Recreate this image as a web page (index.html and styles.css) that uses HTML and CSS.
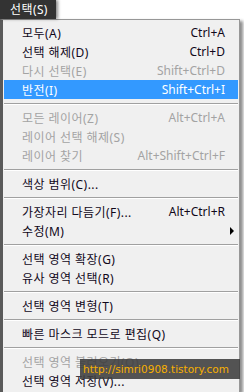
FILE: index.html
```html
<!DOCTYPE html>
<html lang="ko">
<head>
    <meta charset="UTF-8">
    <meta name="viewport" content="width=device-width, initial-scale=1.0">
    <title>선택 메뉴</title>
    <link rel="stylesheet" href="styles.css">
</head>
<body>
    <div class="menubar">
        <div class="menu-title">선택(S)</div>
    </div>

    <ul class="menu">
        <li class="item"><span class="label">모두(A)</span><span class="key">Ctrl+A</span></li>
        <li class="item"><span class="label">선택 해제(D)</span><span class="key">Ctrl+D</span></li>
        <li class="item disabled"><span class="label">다시 선택(E)</span><span class="key">Shift+Ctrl+D</span></li>
        <li class="item active"><span class="label">반전(I)</span><span class="key">Shift+Ctrl+I</span></li>
        <li class="sep"></li>
        <li class="item disabled"><span class="label">모든 레이어(Z)</span><span class="key">Alt+Ctrl+A</span></li>
        <li class="item disabled"><span class="label">레이어 선택 해제(S)</span><span class="key"></span></li>
        <li class="item disabled"><span class="label">레이어 찾기</span><span class="key">Alt+Shift+Ctrl+F</span></li>
        <li class="sep"></li>
        <li class="item"><span class="label">색상 범위(C)...</span><span class="key"></span></li>
        <li class="sep"></li>
        <li class="item"><span class="label">가장자리 다듬기(F)...</span><span class="key">Alt+Ctrl+R</span></li>
        <li class="item has-sub"><span class="label">수정(M)</span><span class="key"></span></li>
        <li class="sep"></li>
        <li class="item"><span class="label">선택 영역 확장(G)</span><span class="key"></span></li>
        <li class="item"><span class="label">유사 영역 선택(R)</span><span class="key"></span></li>
        <li class="sep"></li>
        <li class="item"><span class="label">선택 영역 변형(T)</span><span class="key"></span></li>
        <li class="sep"></li>
        <li class="item"><span class="label">빠른 마스크 모드로 편집(Q)</span><span class="key"></span></li>
        <li class="sep"></li>
        <li class="item disabled"><span class="label">선택 영역 불러오기(O)...</span><span class="key"></span></li>
        <li class="item"><span class="label">선택 영역 저장(V)...</span><span class="key"></span></li>
    </ul>

    <div class="watermark">http://simri0908.tistory.com</div>
</body>
</html>
```

FILE: styles.css
```css
body {
    margin: 0;
    background: #fff;
    font-family: 'Noto Sans', 'Noto Sans CJK KR', sans-serif;
    font-size: 12px;
    color: #10081a;
    width: 244px;
    height: 392px;
    overflow: hidden;
    position: relative;
}

.menubar {
    display: flex;
    height: 19px;
}

.menu-title {
    background: #333;
    color: #fff;
    padding: 0 8px 0 10px;
    line-height: 19px;
    letter-spacing: 0.4px;
    box-shadow: 2px 0 3px rgba(0, 0, 0, 0.45);
    position: relative;
    z-index: 1;
}

.menu {
    list-style: none;
    margin: 0;
    padding: 3px 1px 2px 1px;
    width: 240px;
    box-sizing: border-box;
    background: #f0f0f0;
    border-left: 3px solid #5a5a5a;
    border-top: 1px solid #979797;
    border-right: 1px solid #979797;
    box-shadow: 3px 2px 3px rgba(0, 0, 0, 0.45);
}

.item {
    display: flex;
    align-items: center;
    height: 19px;
    padding: 0 4px 0 18px;
    white-space: nowrap;
}

.item .label {
    flex: 1;
    letter-spacing: 0.45px;
}

.item::after {
    content: "";
    width: 9px;
    height: 0;
}

.item.has-sub::after {
    width: 0;
    margin-left: 5px;
    border-left: 4px solid #000;
    border-top: 4px solid transparent;
    border-bottom: 4px solid transparent;
}

.item.disabled {
    color: #a3a3a3;
}

.item.active {
    background: #3399ff;
    color: #fff;
}

.sep {
    height: 1px;
    background: #a0a0a0;
    border-bottom: 1px solid #fff;
    margin: 4px 0 3px;
}

.watermark {
    position: absolute;
    left: 80px;
    top: 359px;
    width: 160px;
    height: 20px;
    line-height: 20px;
    padding-left: 3px;
    box-sizing: border-box;
    background: rgba(60, 60, 60, 0.88);
    color: #f7b000;
    font-family: 'DejaVu Sans', sans-serif;
    font-size: 10.5px;
    white-space: nowrap;
    overflow: hidden;
}
```
